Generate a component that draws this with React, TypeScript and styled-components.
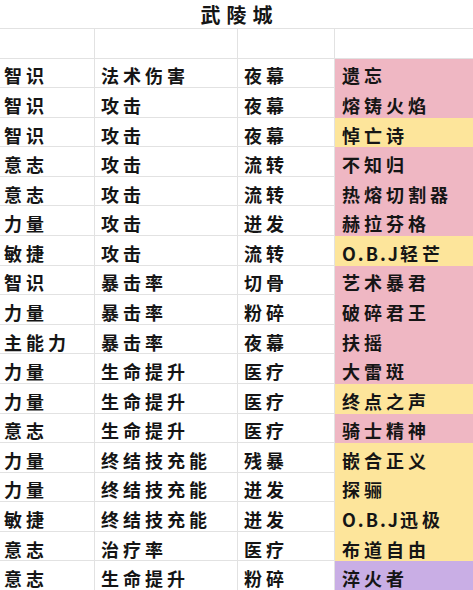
import React from 'react'
import styled, { createGlobalStyle } from 'styled-components'

const GlobalStyle = createGlobalStyle`
  html, body {
    margin: 0;
    padding: 0;
    background: #ffffff;
  }
  body {
    font-family: "Noto Sans CJK SC", "Noto Sans", sans-serif;
    color: #151515;
  }
`

type Tone = 'pink' | 'yellow' | 'purple'

const tones: Record<Tone, string> = {
  pink: '#efb7c3',
  yellow: '#fde59b',
  purple: '#c9aee5',
}

const Page = styled.div`
  width: 473px;
  height: 590px;
  overflow: hidden;
`

const Title = styled.h1`
  margin: 0;
  padding: 2px 0 0 6px;
  text-align: center;
  font-size: 20px;
  font-weight: 700;
  letter-spacing: 6px;
  line-height: 26px;
`

const Sheet = styled.div`
  display: grid;
  grid-template-columns: 95px 143px 97px 1fr;
  grid-auto-rows: 29.58px;
  border-top: 1px solid #e2e2e2;
`

const Cell = styled.div<{ $tone?: Tone }>`
  display: flex;
  align-items: center;
  padding: 5px 0 0 6px;
  box-sizing: border-box;
  font-size: 18px;
  font-weight: 700;
  letter-spacing: 4px;
  white-space: nowrap;
  border-right: 1px solid #e2e2e2;
  border-bottom: 1px solid ${(p) => (p.$tone ? 'transparent' : '#e2e2e2')};
  background: ${(p) => (p.$tone ? tones[p.$tone] : 'transparent')};
  &:nth-child(4n) {
    border-right: none;
    padding-left: 7px;
  }
  &:nth-child(4n + 1) {
    padding-left: 4px;
  }
`

const Latin = styled.span`
  letter-spacing: 2px;
`

const rows: [string, string, string, React.ReactNode, Tone][] = [
  ['智识', '法术伤害', '夜幕', '遗忘', 'pink'],
  ['智识', '攻击', '夜幕', '熔铸火焰', 'pink'],
  ['智识', '攻击', '夜幕', '悼亡诗', 'yellow'],
  ['意志', '攻击', '流转', '不知归', 'pink'],
  ['意志', '攻击', '流转', '热熔切割器', 'pink'],
  ['力量', '攻击', '迸发', '赫拉芬格', 'pink'],
  ['敏捷', '攻击', '流转', <><Latin>O.B.J</Latin>轻芒</>, 'yellow'],
  ['智识', '暴击率', '切骨', '艺术暴君', 'pink'],
  ['力量', '暴击率', '粉碎', '破碎君王', 'pink'],
  ['主能力', '暴击率', '夜幕', '扶摇', 'pink'],
  ['力量', '生命提升', '医疗', '大雷斑', 'pink'],
  ['力量', '生命提升', '医疗', '终点之声', 'yellow'],
  ['意志', '生命提升', '医疗', '骑士精神', 'pink'],
  ['力量', '终结技充能', '残暴', '嵌合正义', 'yellow'],
  ['力量', '终结技充能', '迸发', '探骊', 'yellow'],
  ['敏捷', '终结技充能', '迸发', <><Latin>O.B.J</Latin>迅极</>, 'yellow'],
  ['意志', '治疗率', '医疗', '布道自由', 'yellow'],
  ['意志', '生命提升', '粉碎', '淬火者', 'purple'],
]

export default function App() {
  return (
    <Page>
      <GlobalStyle />
      <Title>武陵城</Title>
      <Sheet>
        <Cell />
        <Cell />
        <Cell />
        <Cell />
        {rows.map(([attr, stat, skill, name, tone], i) => (
          <React.Fragment key={i}>
            <Cell>{attr}</Cell>
            <Cell>{stat}</Cell>
            <Cell>{skill}</Cell>
            <Cell $tone={tone}>{name}</Cell>
          </React.Fragment>
        ))}
      </Sheet>
    </Page>
  )
}
